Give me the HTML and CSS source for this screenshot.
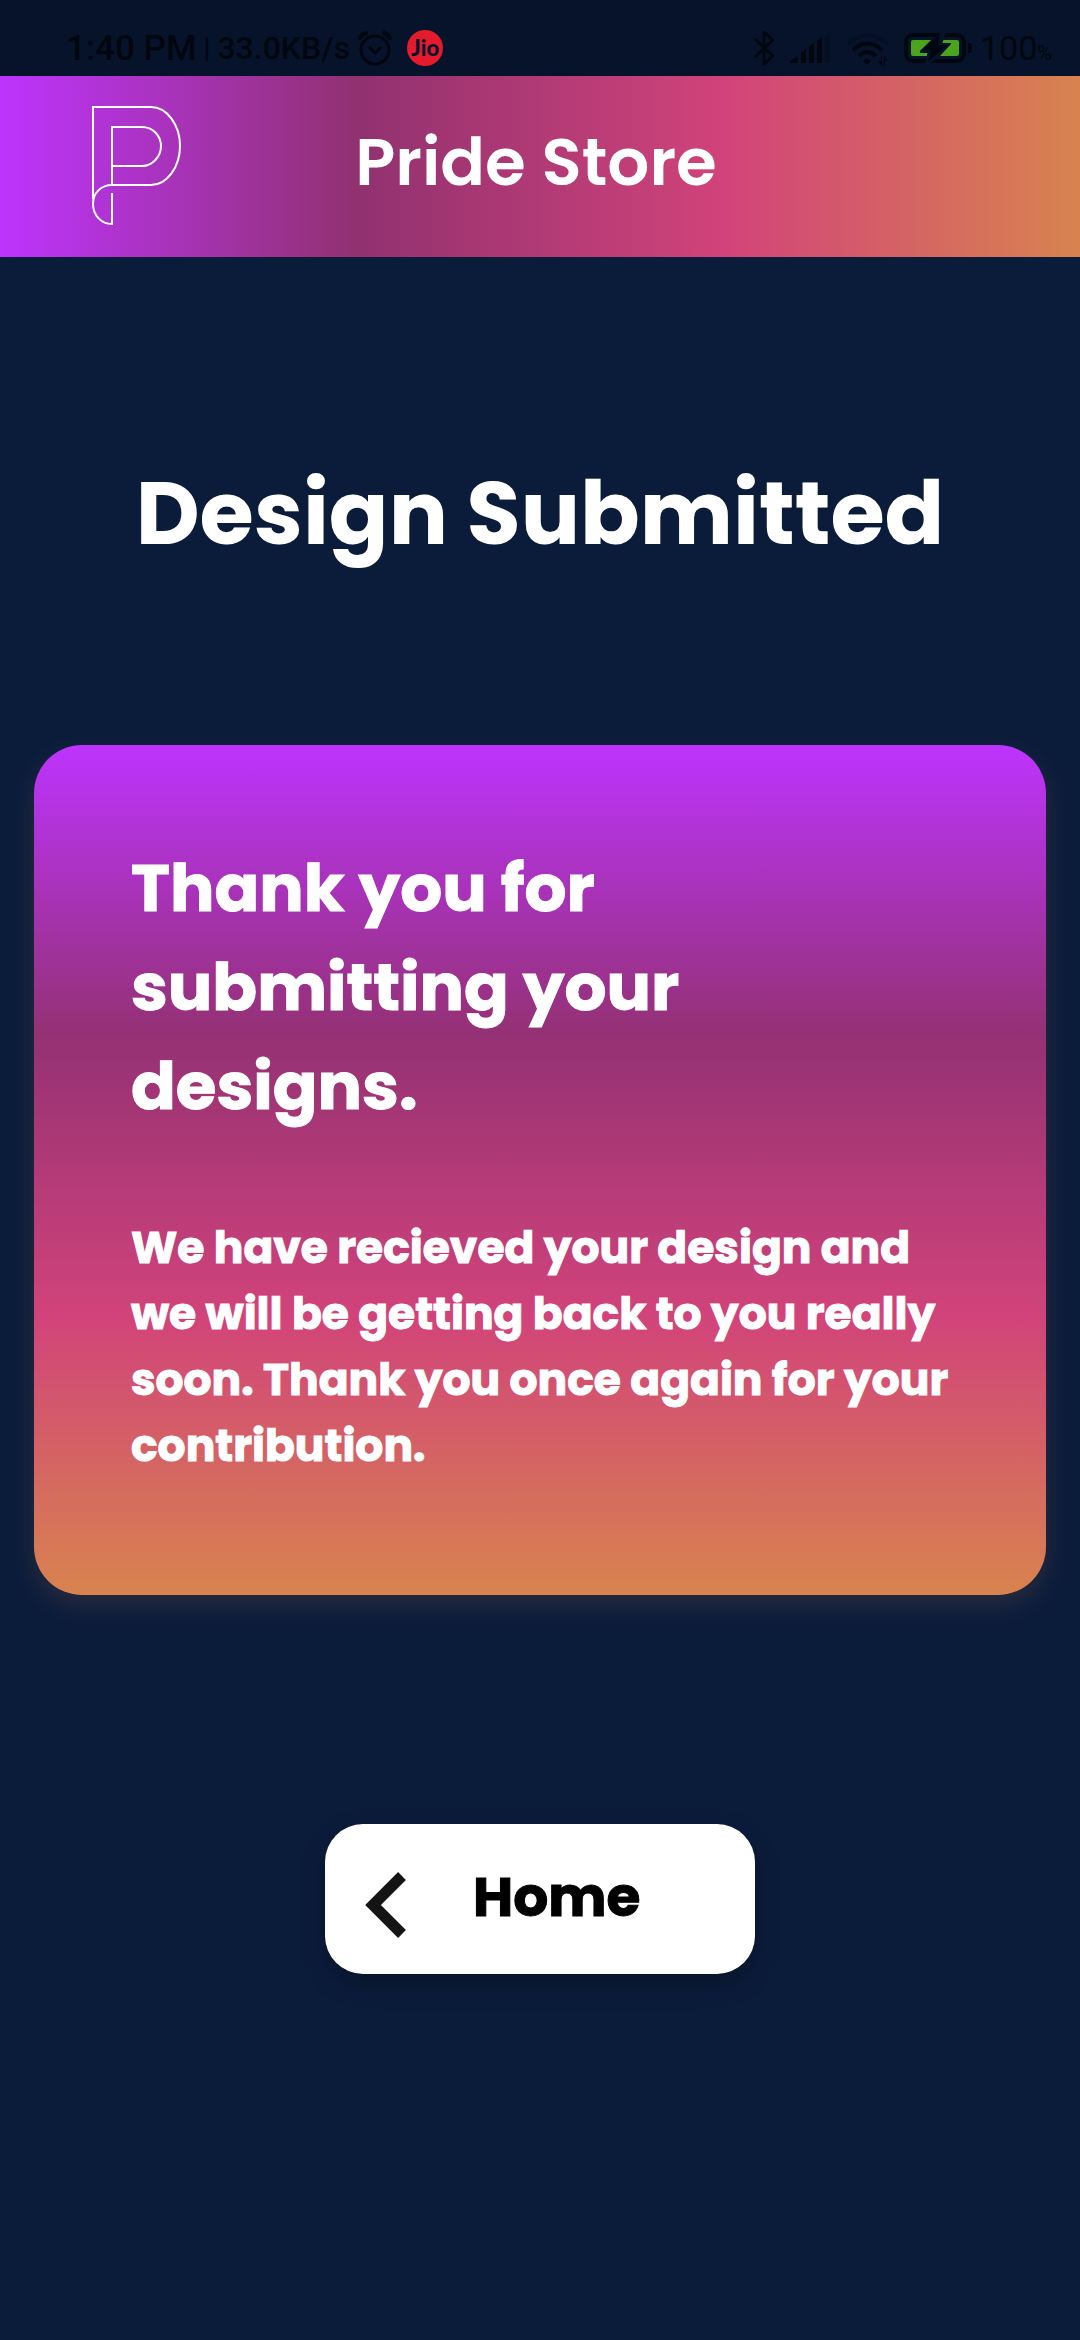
FILE: index.html
```html
<!DOCTYPE html>
<html lang="en">
<head>
<meta charset="utf-8">
<meta name="viewport" content="width=device-width, initial-scale=1">
<title>Pride Store</title>
<link rel="stylesheet" href="styles.css">
</head>
<body>
<div class="status">
  <div class="status-group">
    <span class="time">1:40 PM</span>
    <span class="divider">|</span>
    <span class="speed">33.0KB/s</span>
    <svg class="alarm" width="36" height="36" viewBox="0 0 36 36" fill="none" stroke="currentColor" stroke-width="3" stroke-linecap="round" stroke-linejoin="round"><circle cx="18" cy="20" r="14"/><path d="M13 18l5 5 5-5"/><path d="M3 8q2-4 6-5M27 3q4 1 6 5" stroke-width="4"/></svg>
    <span class="carrier">Jio</span>
  </div>
  <div class="status-group status-right">
    <svg width="22" height="36" viewBox="0 0 22 36" fill="none" stroke="currentColor" stroke-width="3" stroke-linecap="round" stroke-linejoin="round"><path d="M2 10l17 16-9 8V2l9 8L2 26"/></svg>
    <svg class="signal" width="40" height="36" viewBox="0 0 40 36" fill="currentColor"><path d="M0 33v-2l8-5v7zM11 33V23l5-4v14zM19 33V17l5-4v20zM27 33V11l5-4v26z"/><path opacity=".3" d="M35 33V5l5-3v31z"/></svg>
    <svg class="wifi" width="44" height="36" viewBox="0 0 44 36" fill="none" stroke="currentColor" stroke-width="4"><path opacity=".3" d="M2 14Q21-4 42 14"/><path d="M7 20Q21 7 36 20M13 26q8-8 17 0"/><path d="M17 31q4-4 8 0l-4 4z" fill="currentColor" stroke="none"/><path d="M32 31l4 5V26h-1v5zM38 36V26l4 5h-3v5z" fill="currentColor" stroke="none"/></svg>
    <svg class="battery" width="68" height="32" viewBox="0 0 68 32"><rect x="2" y="3" width="58" height="26" rx="7" fill="none" stroke="currentColor" stroke-width="4"/><path d="M64 11h1q3 0 3 3v4q0 3-3 3h-1z" fill="currentColor"/><path d="M9 8h18L16 19v2h8l-1 3H9q-2 0-2-2V10q0-2 2-2zM39 8h14q2 0 2 2v12q0 2-2 2H36l11-12v-1h-9z" fill="#4aa51d"/><path d="M37 0L16 19h8l-3 13h5L47 12h-9l4-12z" fill="#07132b"/><path d="M36 1L19 18h8l-3 12 19-17h-9z" fill="currentColor"/></svg>
    <span class="level">100<small>%</small></span>
  </div>
</div>
<header class="header">
  <svg class="logo" width="90" height="121" viewBox="0 1 90 121" fill="none" stroke="#fff" stroke-width="2"><path d="M2 94V2h58c16 0 29 18 29 39S76 80 60 80H21C10 80 2 88 2 99s8 20 19 20V88M21 80V22h30c11 0 19 9 19 19s-8 20-19 20H21"/></svg>
  <span class="brand">Pride Store</span>
</header>
<main class="main">
  <h1 class="title">Design Submitted</h1>
  <section class="card">
    <h2 class="card-title">Thank you for submitting your designs.</h2>
    <p class="card-text">We have recieved your design and we will be getting back to you really soon. Thank you once again for your contribution.</p>
  </section>
  <button class="home" type="button">
    <svg class="chevron" width="42" height="66" viewBox="0 0 42 66" fill="none" stroke="#141414" stroke-width="11"><path d="M37 4L8 33l29 29"/></svg>
    <span>Home</span>
  </button>
</main>
</body>
</html>
```
FILE: styles.css
```css
* { box-sizing: border-box; }
body {
  margin: 0;
  min-height: 100vh;
  background: #0b1c3b;
  color: #fff;
  font-family: Poppins, Inter, sans-serif;
}
h1, h2, p { margin: 0; }
svg { display: block; flex: none; }

.status {
  display: flex;
  justify-content: space-between;
  height: 76px;
  padding: 20px 28px 0 66px;
  background: #07132b;
  color: #02060f;
  font-family: Roboto, sans-serif;
}
.status-group { display: flex; align-items: center; white-space: nowrap; }
.time { font-size: 35px; font-weight: 500; }
.divider { margin: 0 7px; font-size: 28px; }
.speed { font-size: 32px; font-weight: 500; }
.alarm { margin-left: 7px; }
.carrier {
  width: 36px;
  height: 36px;
  margin-left: 14px;
  border-radius: 50%;
  background: #e41b2d;
  color: #07132b;
  font: 900 22px/36px Lato, sans-serif;
  text-align: center;
}
.signal { margin-left: 14px; }
.wifi { margin-left: 16px; }
.battery { margin-left: 14px; }
.level { margin-left: 8px; font-size: 34px; }
.level small { font-size: 20px; }

.header {
  display: grid;
  grid-template-columns: 1fr auto 1fr;
  align-items: center;
  height: 181px;
  padding: 0 99px 0 91px;
  background: linear-gradient(90deg, #bd34fe, #913170 33%, #d1437a 67%, #d8834f);
}
.brand {
  font-size: 66px;
  font-weight: 600;
  line-height: 99px;
  padding-bottom: 9px;
}

.main {
  display: flex;
  flex-direction: column;
  align-items: center;
  padding: 191px 34px;
}
.title { font-size: 88px; font-weight: 700; line-height: 132px; }
.card {
  align-self: stretch;
  margin-top: 165px;
  padding: 94px 80px 116px 97px;
  border-radius: 48px;
  background: linear-gradient(#bd34fe, #943174 34%, #d1437a 67%, #d8834f);
  box-shadow: 0 10px 24px rgba(216, 131, 79, 0.15);
  -webkit-text-stroke: 1px currentColor;
}
.card-title {
  max-width: 600px;
  font-size: 66px;
  font-weight: 700;
  line-height: 99px;
}
.card-text {
  margin-top: 79px;
  font-size: 44px;
  font-weight: 700;
  line-height: 66px;
}
.home {
  display: flex;
  align-items: center;
  gap: 66px;
  width: 430px;
  height: 150px;
  margin-top: 229px;
  padding: 12px 40px 0;
  border: 0;
  border-radius: 38px;
  background: #fff;
  color: #000;
  font: 700 55px/84px Poppins, Inter, sans-serif;
  box-shadow: 0 10px 24px rgba(0, 0, 0, 0.3);
  -webkit-text-stroke: 1px currentColor;
}
.home span { padding-bottom: 16px; }
```
